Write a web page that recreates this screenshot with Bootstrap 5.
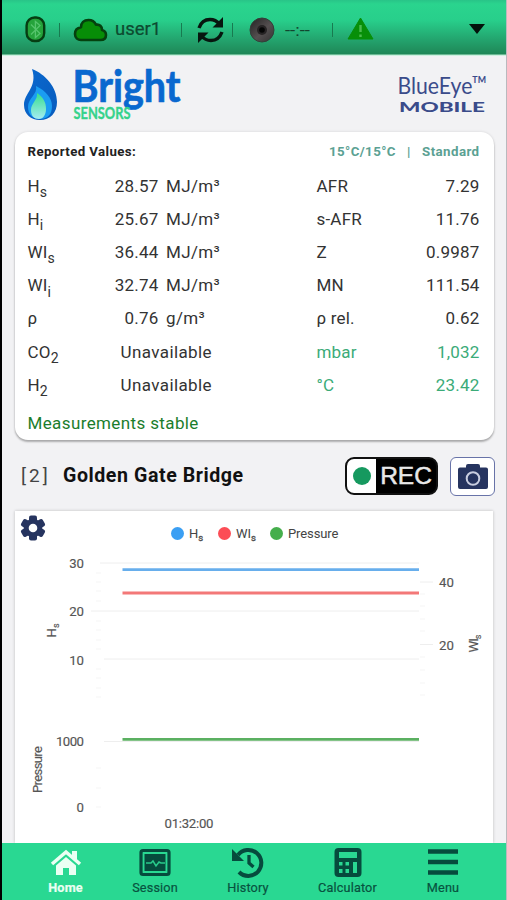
<!DOCTYPE html>
<html lang="en">
<head>
<meta charset="utf-8">
<meta name="viewport" content="width=device-width, initial-scale=1">
<title>BlueEye Mobile</title>
<link rel="stylesheet" href="https://cdn.jsdelivr.net/npm/bootstrap@5.3.0/dist/css/bootstrap.min.css">
<style>
  body { font-family: Roboto, "Liberation Sans", sans-serif; background: #f2f2f4; color: #333; }
  svg { display: block; flex: none; }
  .app { height: 900px; border-left: 2px solid #000; border-right: 1px solid #b9b9bd; overflow: hidden; }
  .status-bar { height: 56px; padding: 3px 21px 0 23px; background: linear-gradient(#28c488 0, #2ad48e 4px, #28cf8b 20px, #23a36d 40px, #1f8757 54px, #b5ead0 55px, #e8f7ef 56px); }
  .sep { width: 1px; height: 14px; background: #187a50; }
  .user-name { font-size: 18.5px; width: 46px; margin-left: 7px; line-height: 1; color: #0d4a30; -webkit-text-stroke: .2px #0d4a30; }
  .brand-row { height: 76px; padding: 1px 18px 0 20px; }
  .values-card { height: 308px; margin: 0 12px 0 13px; padding: 10px 14.500px 0 12.500px; border-radius: 13px; box-shadow: 0 2px 2px rgba(0,0,0,.27), 0 0 3px rgba(0,0,0,.12); }
  .card-top { height: 18px; margin-bottom: 10px; font-size: 13.300px; font-weight: 700; line-height: 19px; letter-spacing: .38px; color: #222; }
  .basis { color: #5ba193; white-space: pre; letter-spacing: .42px; }
  .reading-row { display: grid; grid-template-columns: 70px 61px 158px 60px 1fr; height: 33.12px; align-items: center; font-size: 17px; letter-spacing: .2px; white-space: nowrap; line-height: 1; }
  .reading-row sub { font-size: 14px; bottom: -.37em; line-height: 0; letter-spacing: 0; }
  .unit { padding-left: 7.500px; letter-spacing: .35px; }
  .missing { grid-column: 2 / 4; padding-left: 23px; letter-spacing: .4px; }
  .ambient { color: #3bab78; }
  .stable { font-size: 17px; letter-spacing: .38px; line-height: 20px; margin-top: 11px; color: #1b7d2c; }
  .site-row { height: 71px; padding: 1px 11px 0 19px; }
  .site-index { font-size: 19px; width: 42px; letter-spacing: 3px; color: #444; }
  .site-name { font-size: 19.6px; font-weight: 700; letter-spacing: .56px; color: #111; }
  .rec-btn { width: 93px; height: 38px; border: 2px solid #111; border-radius: 9px; background: #000; }
  .rec-light { width: 29px; background: #fff; border-radius: 7px 0 0 7px; }
  .rec-light span { width: 18px; height: 18px; background: #16995f; }
  .rec-label { font: 24.5px/1 "Liberation Sans", sans-serif; color: #e8e8e8; -webkit-text-stroke: .5px #e8e8e8; }
  .cam-btn { width: 45px; height: 39px; border: 1.5px solid #6873a8; border-radius: 6px; margin-left: 12px; }
  .chart-card { height: 332px; margin: 0 13px; box-shadow: 0 0 3px rgba(0,0,0,.22); }
  .legend-row { height: 38px; padding: 4px 0 0 5px; font-size: 13px; color: #444; }
  .legend-row sub { font-size: 9.5px; bottom: -.35em; -webkit-text-stroke: .3px; }
  .legend-items { margin: 9px 0 0 125px; letter-spacing: -.1px; }
  .dot { width: 13px; height: 13px; margin-right: 5px; }
  .chart text { font-size: 13.2px; fill: #555; stroke: #555; stroke-width: .15px; }
  .tabbar { height: 57px; background: #29d892; font-size: 12.7px; letter-spacing: .15px; }
  .tabbar a { color: #08523f; text-decoration: none; padding-top: 3px; line-height: 16px; -webkit-text-stroke: .2px; }
  .tabbar a.current { color: #eafff3; font-weight: 700; }
  .tabbar svg { height: 34px; margin: 0 auto; }
</style>
<script src="https://cdn.jsdelivr.net/npm/bootstrap@5.3.0/dist/js/bootstrap.bundle.min.js"></script>
</head>
<body>
<div class="app d-flex flex-column">
  <header class="status-bar d-flex align-items-center flex-shrink-0">
    <svg width="21" height="27" viewBox="0 0 21 27"><rect x="1.600" y="1.500" width="17.600" height="23.500" rx="8" fill="#25a33b" stroke="#063d12" stroke-width="2.400"/><path d="M6 8.500l9 9-4.600 4V5.500l4.600 4-9 9" fill="none" stroke="#55c46c" stroke-width="1.300"/></svg>
    <i class="sep" style="margin-left:13px"></i>
    <svg style="margin-left:13px" width="35" height="24" viewBox="0 0 35 24"><path d="M8 22h19.500c3.500 0 5.500-2 5.500-5 0-2.500-1.500-4.300-4-5 .2-3.500-2.500-6-6-5.300C21.500 3.500 18.500 2 15.500 2 11 2 8 5 8 9.300c-4 .7-6 3.200-6 6.700 0 4 3 6 6 6z" fill="#078d07" stroke="#05400e" stroke-width="2.600" stroke-linejoin="round"/></svg>
    <span class="user-name">user1</span>
    <i class="sep" style="margin-left:20px"></i>
    <svg style="margin-left:15px" width="27" height="26" viewBox="0 0 27 26" fill="none" stroke="#07160f" stroke-width="3.400"><path d="M2 11C4 5 8 2.500 13 2.500c4 0 7 1.500 9.500 4.500M25 15c-2 5.500-6 8.500-11 8.500-4 0-7-1.500-9.500-4.500"/><path d="M26 0v10.500H15.500zM1 26V15.500h10.500z" fill="#07160f" stroke="none"/></svg>
    <i class="sep" style="margin-left:8px"></i>
    <svg style="margin-left:16px" width="26" height="26" viewBox="0 0 26 26"><defs><linearGradient id="lens" x1="0" y1="0" x2="1" y2="1"><stop stop-color="#222"/><stop offset=".55" stop-color="#554f50"/><stop offset="1" stop-color="#333"/></linearGradient></defs><circle cx="13" cy="13" r="12" fill="url(#lens)" stroke="#333f39"/><circle cx="13" cy="13" r="5" fill="#262324"/><circle cx="13" cy="13" r="2.800" fill="#050505"/></svg>
    <svg style="margin-left:9px" width="28" height="22" viewBox="0 0 28 22"><text x="1" y="16.500" font-size="17" textLength="25" lengthAdjust="spacingAndGlyphs" fill="#12452f">--:--</text></svg>
    <i class="sep" style="margin-left:20px"></i>
    <svg style="margin-left:14px;margin-top:-3px" width="27" height="24" viewBox="0 0 27 24"><path d="M13.500 2L26 23H1z" fill="#078f08" stroke="#078f08"/><path d="M13.500 9v7M13.500 18.500v2.500" stroke="#4dbb50" stroke-width="2.400"/></svg>
    <svg class="ms-auto" style="margin-top:-2px" width="16" height="10" viewBox="0 0 16 10"><path d="M0 0h16L8 10z" fill="#04120b"/></svg>
  </header>

  <div class="brand-row d-flex justify-content-between flex-shrink-0">
    <svg width="170" height="70" viewBox="22 57 170 70">
      <defs><linearGradient id="core" x1="0" y1="0" x2="0" y2="1"><stop stop-color="#36df8c"/><stop offset="1" stop-color="#a5ecf2"/></linearGradient>
      <linearGradient id="outer" x1="0" y1="0" x2="1" y2="1"><stop stop-color="#0b69cf"/><stop offset="1" stop-color="#075bbd"/></linearGradient></defs>
      <path d="M32 69c13 5 25 18 25 33 0 11-7 18-17 18-9 0-16-6-16-15 0-12 14-18 8-36z" fill="url(#outer)"/>
      <path d="M36 86c10 5 16 12 16 20 0 8-4 13-12 13-7 0-12-4-12-12 0-9 10-13 8-21z" fill="#1b9df2"/>
      <path d="M37 93c6 4 9 9 9 16 0 6-3 10-7 10-5 0-8-3-8-9 0-7 7-10 6-17z" fill="url(#core)"/>
      <text x="72.500" y="101.500" font-family="Lato, sans-serif" font-weight="700" font-size="43.500" textLength="108" lengthAdjust="spacingAndGlyphs" fill="#0968cf" stroke="#0968cf" stroke-width=".7">Bright</text>
      <text x="73.500" y="119" font-family="Lato, sans-serif" font-weight="700" font-size="17.500" textLength="57" lengthAdjust="spacingAndGlyphs" fill="#35d28b" stroke="#35d28b" stroke-width=".4">SENSORS</text>
    </svg>
    <svg width="92" height="60" viewBox="395 57 92 60" fill="#3a4b8a">
      <text x="396.500" y="93.500" font-family="Lato, sans-serif" font-size="24" textLength="88.500" lengthAdjust="spacingAndGlyphs">BlueEye<tspan font-size="10" font-weight="700" dy="-10.500">TM</tspan></text>
      <text x="398" y="112" font-family="Lato, sans-serif" font-size="13.500" font-weight="900" textLength="86" lengthAdjust="spacingAndGlyphs">MOBILE</text>
    </svg>
  </div>

  <section class="values-card bg-white flex-shrink-0">
    <div class="card-top d-flex justify-content-between"><span>Reported Values:</span><span class="basis">15°C/15°C   |   Standard</span></div>
    <div class="reading-row"><span>H<sub>s</sub></span><span class="text-end">28.57</span><span class="unit">MJ/m³</span><span>AFR</span><span class="text-end">7.29</span></div>
    <div class="reading-row"><span>H<sub>i</sub></span><span class="text-end">25.67</span><span class="unit">MJ/m³</span><span>s-AFR</span><span class="text-end">11.76</span></div>
    <div class="reading-row"><span>WI<sub>s</sub></span><span class="text-end">36.44</span><span class="unit">MJ/m³</span><span>Z</span><span class="text-end">0.9987</span></div>
    <div class="reading-row"><span>WI<sub>i</sub></span><span class="text-end">32.74</span><span class="unit">MJ/m³</span><span>MN</span><span class="text-end">111.54</span></div>
    <div class="reading-row"><span>ρ</span><span class="text-end">0.76</span><span class="unit">g/m³</span><span>ρ rel.</span><span class="text-end">0.62</span></div>
    <div class="reading-row"><span>CO<sub>2</sub></span><span class="missing">Unavailable</span><span class="ambient">mbar</span><span class="ambient text-end">1,032</span></div>
    <div class="reading-row"><span>H<sub>2</sub></span><span class="missing">Unavailable</span><span class="ambient">°C</span><span class="ambient text-end">23.42</span></div>
    <div class="stable">Measurements stable</div>
  </section>

  <section class="site-row d-flex align-items-center flex-shrink-0">
    <span class="site-index">[2]</span><span class="site-name">Golden Gate Bridge</span>
    <div class="rec-btn d-flex align-items-center ms-auto"><span class="rec-light h-100 d-flex align-items-center justify-content-center"><span class="rounded-circle"></span></span><span class="rec-label flex-fill text-center">REC</span></div>
    <div class="cam-btn d-flex align-items-center justify-content-center bg-white"><svg width="32" height="27" viewBox="0 0 32 27"><path d="M3 4.500h6V3q0-2 2-2h10q2 0 2 2v1.500h6q2 0 2 2V24q0 2-2 2H3q-2 0-2-2V6.500q0-2 2-2z" fill="#26345f"/><circle cx="16" cy="15.500" r="6.300" fill="none" stroke="#c9cee0" stroke-width="2"/></svg></div>
  </section>

  <section class="chart-card bg-white flex-shrink-0">
    <div class="legend-row d-flex align-items-start">
      <svg width="26" height="26" viewBox="-13 -13 26 26" fill="#26345f"><rect x="-4" y="-12.500" width="8" height="25" rx="2"/><rect x="-4" y="-12.500" width="8" height="25" rx="2" transform="rotate(60)"/><rect x="-4" y="-12.500" width="8" height="25" rx="2" transform="rotate(120)"/><circle r="9.300"/><circle r="4.300" fill="#fff"/></svg>
      <div class="legend-items d-flex align-items-center">
        <i class="dot rounded-circle" style="background:#3b9ff3"></i><span style="width:29px">H<sub>s</sub></span>
        <i class="dot rounded-circle" style="background:#fc4d56"></i><span style="width:34px">WI<sub>s</sub></span>
        <i class="dot rounded-circle" style="background:#45ae4c"></i><span>Pressure</span>
      </div>
    </div>
    <svg class="chart" width="479" height="294" viewBox="15 549 479 294">
      <path d="M100 563H419M91 611H419M104 659H419M104 741.500H419M420 582h13M420 644.500h13" stroke="#eee"/>
      <path d="M96 573h5m-5 9h5m-5 9h5m-5 10h5m-5 20h5m-5 9h5m-5 10h5m-5 9h5m-5 20h5m-5 9h5m-5 10h5m-5 9h5m-5 71h5m-5 20h5m-5 19h5M420 594h5m-5 12h5m-5 13h5m-5 12h5m-5 26h5m-5 13h5m-5 13h5m-5 12h5" stroke="#f5f5f5"/>
      <g stroke-width="2.800"><path d="M122.500 569.700H419" stroke="#67aeec"/><path d="M122.500 593H419" stroke="#f37878"/><path d="M122.500 739.300H419" stroke="#5bb061"/></g>
      <g text-anchor="end"><text x="84" y="568">30</text><text x="84" y="616">20</text><text x="84" y="664.500">10</text><text x="84" y="746" textLength="28">1000</text><text x="84" y="812">0</text></g>
      <text x="439" y="587">40</text><text x="439" y="649.500">20</text>
      <text x="164.500" y="828" textLength="49">01:32:00</text>
      <text transform="translate(55.500 637.500) rotate(-90)">H<tspan font-size="9" dy="3">s</tspan></text>
      <text transform="translate(41.500 793) rotate(-90)" textLength="47">Pressure</text>
      <text transform="translate(478 652.500) rotate(-90)" textLength="18">WI<tspan font-size="9" dy="3">s</tspan></text>
    </svg>
  </section>

  <nav class="tabbar d-flex flex-shrink-0 text-center">
    <a href="#" class="current" style="width:127px"><svg width="32" viewBox="0 0 32 34"><path d="M2 18L16 6l14 12" fill="none" stroke="#eafff3" stroke-width="3.600"/><path d="M22 5h5v9l-5-4zM6 19.500L16 11l10 8.500V29h-7v-7h-6v7H6z" fill="#eafff3"/></svg>Home</a>
    <a href="#" style="width:52px"><svg width="32" viewBox="0 0 32 34"><rect x="2" y="4.500" width="28" height="24" rx="2" fill="none" stroke="#064b3d" stroke-width="3.200"/><rect x="5.500" y="8" width="21" height="17" fill="#064b3d"/><path d="M7 17h5l2-2 3 5 3-4 2 1h4" fill="none" stroke="#29c98a" stroke-width="1.500"/></svg>Session</a>
    <a href="#" style="width:134px"><svg width="34" viewBox="0 0 34 34"><path d="M7 9a13 13 0 1 1 1 17" fill="none" stroke="#064b3d" stroke-width="4"/><path d="M1 3v12h12z" fill="#064b3d"/><path d="M18 9v8l4.500 4" fill="none" stroke="#064b3d" stroke-width="3.300"/></svg>History</a>
    <a href="#" style="width:65px"><svg width="30" viewBox="0 0 30 34"><rect x="1.500" y="2" width="27" height="29" rx="4" fill="#064b3d"/><path d="M6 6h18v6H6zM6 16h3.500v3.500H6zm6.500 0H16v3.500h-3.500zM6 23h3.500v4H6zm6.500 0H16v4h-3.500zM20 16h4v11h-4z" fill="#29d892"/></svg>Calculator</a>
    <a href="#" style="width:126px"><svg width="32" viewBox="0 0 32 34"><path d="M1 5.500h30M1 16h30M1 26.500h30" stroke="#064b3d" stroke-width="4.500"/></svg>Menu</a>
  </nav>
</div>
</body>
</html>
